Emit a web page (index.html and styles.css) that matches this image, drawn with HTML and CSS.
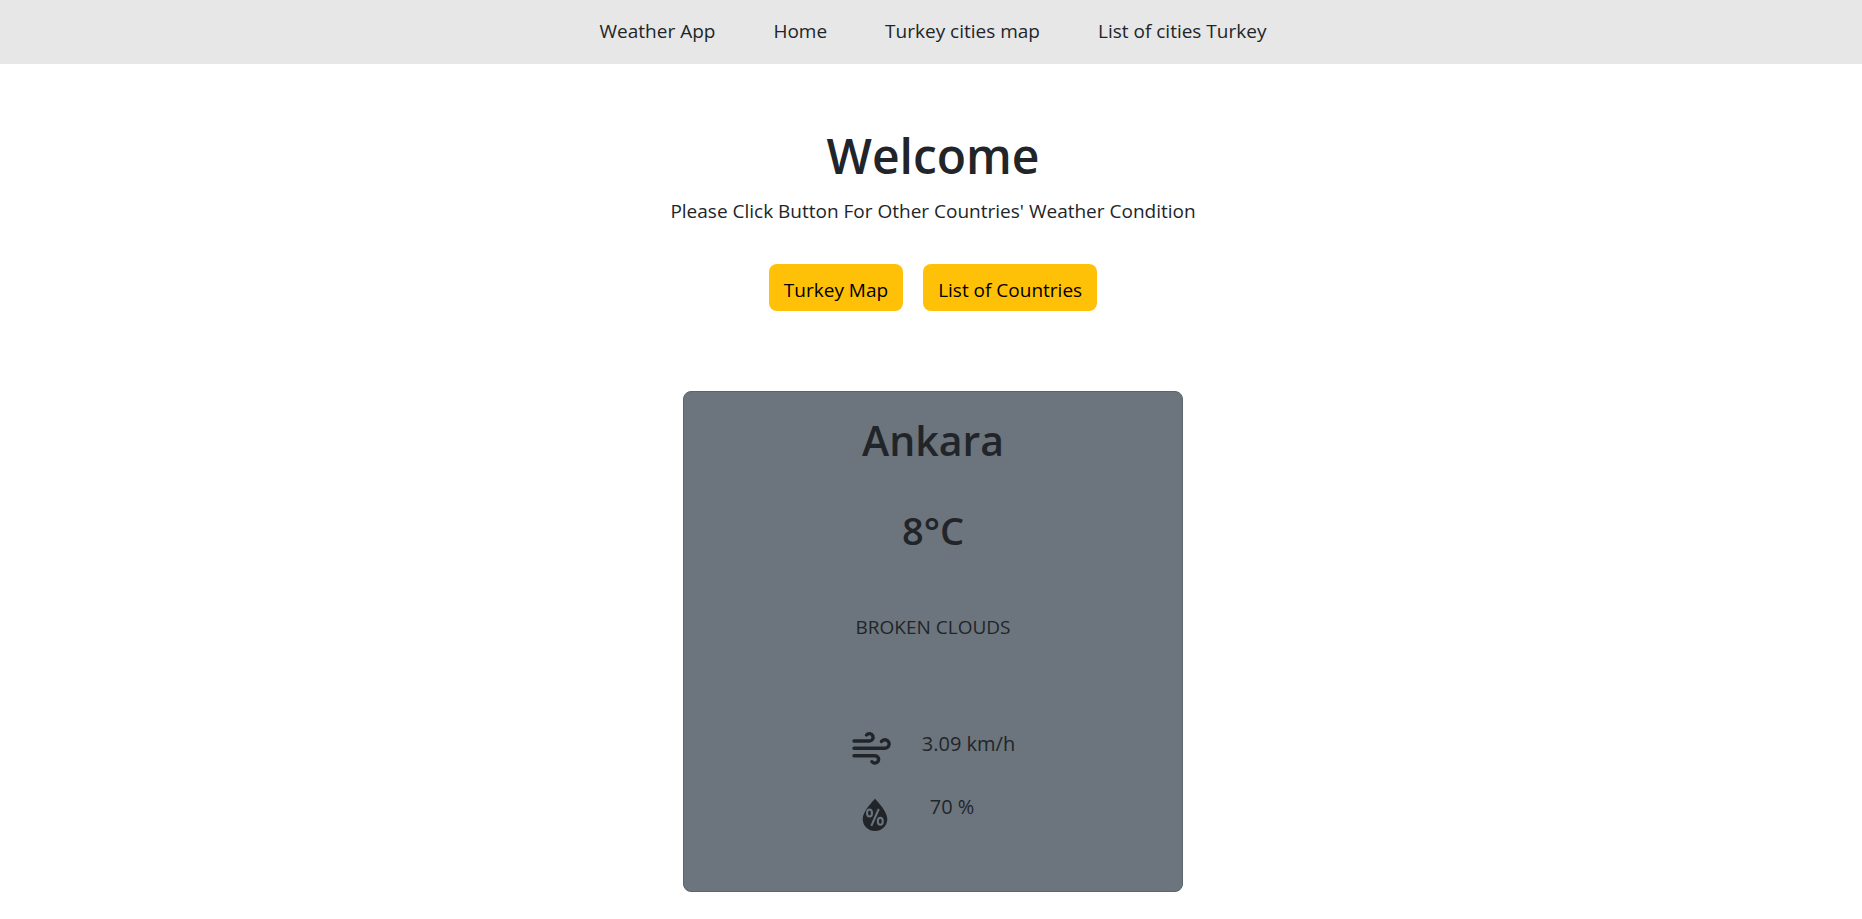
FILE: index.html
```html
<!DOCTYPE html>
<html lang="en">
<head>
<meta charset="utf-8">
<title>Weather App</title>
<link rel="stylesheet" href="styles.css">
</head>
<body>
<nav class="navbar">
  <a href="#">Weather App</a>
  <a href="#">Home</a>
  <a href="#">Turkey cities map</a>
  <a href="#">List of cities Turkey</a>
</nav>
<main class="main">
  <h1 class="title">Welcome</h1>
  <p class="subtitle">Please Click Button For Other Countries' Weather Condition</p>
  <div class="actions">
    <button class="btn" type="button">Turkey Map</button>
    <button class="btn" type="button">List of Countries</button>
  </div>
  <section class="card">
    <h2 class="city">Ankara</h2>
    <h3 class="temp">8°C</h3>
    <p class="condition">BROKEN CLOUDS</p>
    <div class="stats">
      <svg class="icon" viewBox="0 0 40 40" fill="none" stroke="currentColor" stroke-width="3.4" stroke-linecap="round" aria-hidden="true">
        <path d="M3 13H18.300a3.700 3.700 0 1 0-2.800-6"/>
        <path d="M3 20.300H34a4.300 4.300 0 1 0-3.600-6.800"/>
        <path d="M3 27.700H23.600a3.700 3.700 0 1 1-2.600 6"/>
      </svg>
      <span class="value">3.09 km/h</span>
      <svg class="icon" viewBox="0 0 40 40" fill="none" aria-hidden="true">
        <path fill="currentColor" d="M24 7.800C22 10 11.700 20.500 11.700 28a12.300 12 0 0 0 24.600 0C36.300 20.500 26 10 24 7.800Z"/>
        <g class="percent" stroke-width="2">
          <ellipse cx="18.500" cy="22" rx="2.500" ry="3.500"/>
          <ellipse cx="29.300" cy="30.300" rx="2.500" ry="3.500"/>
          <path d="M27.800 18 20.300 34.800"/>
        </g>
      </svg>
      <span class="value humidity">70 %</span>
    </div>
  </section>
</main>
</body>
</html>
```
FILE: styles.css
```css
* {
  box-sizing: border-box;
}

body {
  margin: 0;
  background: #fff;
  color: #212529;
  font-family: "Open Sans", "Noto Sans", sans-serif;
  font-size: 19px;
  line-height: 32px;
}

h1, h2, h3, p {
  margin: 0;
}

.navbar {
  display: flex;
  justify-content: center;
  gap: 58px;
  padding: 15px 16px 17px 20px;
  background: #e7e7e7;
}

.navbar a {
  color: inherit;
  text-decoration: none;
}

.main {
  display: flex;
  flex-direction: column;
  align-items: center;
  padding: 58px 16px 28px 20px;
  text-align: center;
}

.title {
  font-size: 48px;
  font-weight: 600;
  line-height: 68px;
}

.subtitle {
  margin-top: 5px;
}

.actions {
  display: flex;
  gap: 20px;
  margin-top: 37px;
}

.btn {
  padding: 10px 15px 5px;
  border: 0;
  border-radius: 8px;
  background: #ffc107;
  color: #000;
  font: inherit;
}

.card {
  width: 100%;
  max-width: 500px;
  margin-top: 80px;
  padding: 18px 16px 60px;
  border: 1px solid #5b656c;
  border-radius: 8px;
  background: #6c757d;
}

.city {
  font-size: 41px;
  font-weight: 600;
  line-height: 60px;
}

.temp {
  margin-top: 32px;
  font-size: 38px;
  font-weight: 600;
  line-height: 56px;
}

.condition {
  margin-top: 53px;
  font-weight: 500;
}

.stats {
  display: grid;
  grid-template-columns: 40px max-content;
  justify-content: center;
  column-gap: 31px;
  row-gap: 23px;
  margin-top: 85px;
  text-align: left;
}

.icon {
  width: 40px;
  height: 40px;
  overflow: visible;
}

.value {
  font-size: 20px;
}

.humidity {
  padding-left: 8px;
}

.percent {
  stroke: #6c757d;
}
```
